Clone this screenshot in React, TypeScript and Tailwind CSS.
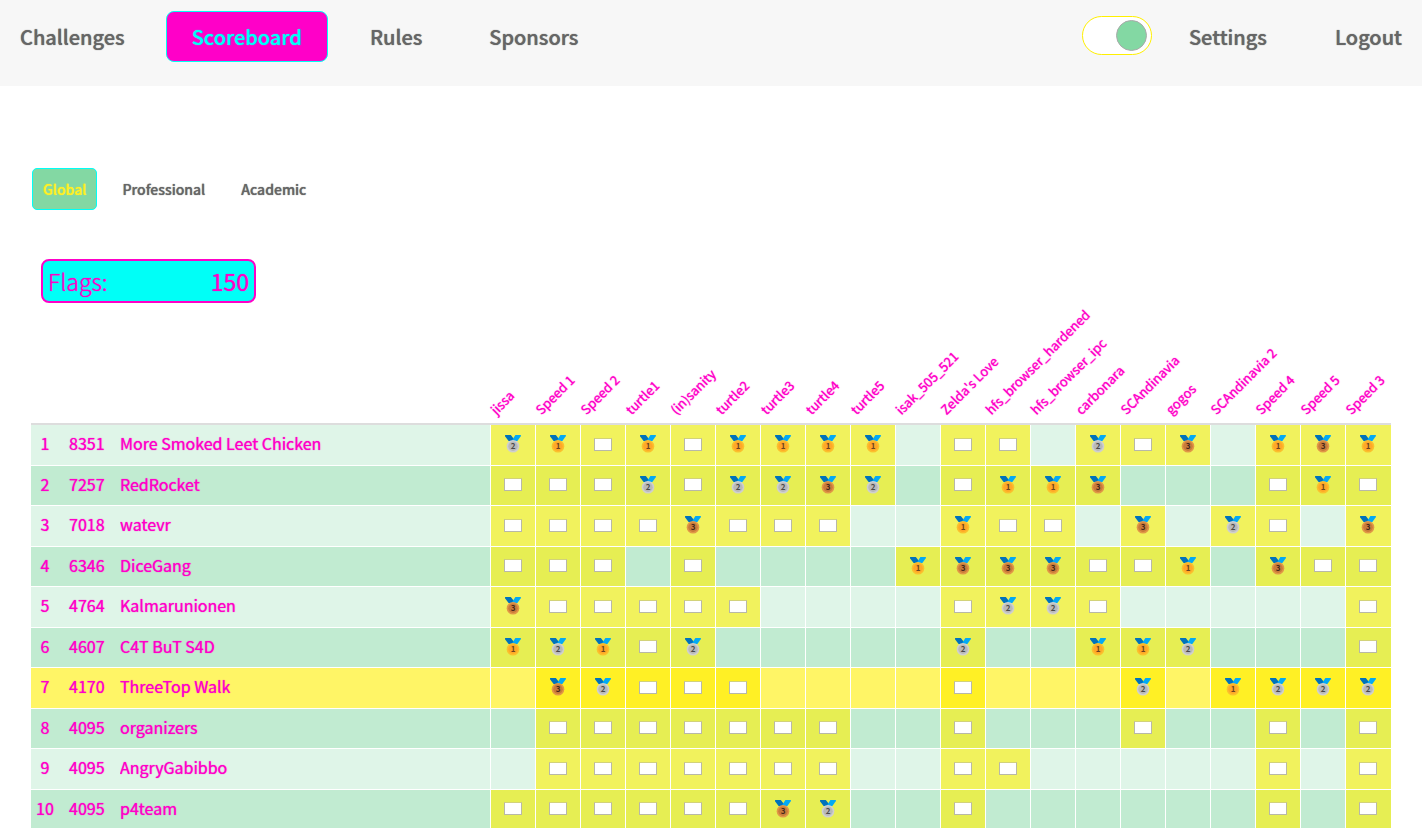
import { useState } from "react";

type Solve = "1" | "2" | "3" | "f" | "-";

const challenges = [
  "jissa", "Speed 1", "Speed 2", "turtle1", "(in)sanity", "turtle2", "turtle3", "turtle4", "turtle5",
  "isak_505_521", "Zelda's Love", "hfs_browser_hardened", "hfs_browser_ipc", "carbonara", "SCAndinavia",
  "gogos", "SCAndinavia 2", "Speed 4", "Speed 5", "Speed 3",
];

// One character per challenge: 1-3 is a medal, f a plain flag, - unsolved.
const teams = [
  { score: 8351, name: "More Smoked Leet Chicken", solves: "21f1f1111-ff-2f3-131" },
  { score: 7257, name: "RedRocket", solves: "fff2f2232-f113---f1f" },
  { score: 7018, name: "watevr", solves: "ffff3fff--1ff-3-2f-3" },
  { score: 6346, name: "DiceGang", solves: "fff-f----1333ff1-3ff" },
  { score: 4764, name: "Kalmarunionen", solves: "3fffff----f22f-----f" },
  { score: 4607, name: "C4T BuT S4D", solves: "121f2-----2--112---f" },
  { score: 4170, name: "ThreeTop Walk", solves: "-32fff----f---2-1222", own: true },
  { score: 4095, name: "organizers", solves: "-fffffff--f---f--f-f" },
  { score: 4095, name: "AngryGabibbo", solves: "-fffffff--ff-----f-f" },
  { score: 4095, name: "p4team", solves: "ffffff32--f------f-f" },
];

const metals = {
  "1": { rim: "#fbc02d", face: "#ffa828", ink: "#6b4520" },
  "2": { rim: "#cfcfcf", face: "#b9b9b9", ink: "#4a4a4a" },
  "3": { rim: "#e19747", face: "#c97b3a", ink: "#45291c" },
};

function Medal({ place }: { place: "1" | "2" | "3" }) {
  const m = metals[place];
  return (
    <svg viewBox="0 0 18 18" className="h-[18px] w-[18px] [text-shadow:none]" role="img" aria-label={`Place ${place}`}>
      <path d="M1 0h5.8L10 4 8 6H4.6L1.2 1.4Z" fill="#0072bb" />
      <path d="M11.4 0H17l-.3 1.2L13.4 6H7.6Z" fill="#03a9f4" />
      <circle cx="9" cy="11.2" r="6.3" fill={m.rim} />
      <circle cx="9" cy="11.2" r="4.7" fill={m.face} />
      <text x="9" y="14.2" textAnchor="middle" fontSize="8" fontWeight="700" fill={m.ink} fontFamily="'Noto Sans CJK SC', sans-serif">
        {place}
      </text>
    </svg>
  );
}

function Mark({ solve }: { solve: Solve }) {
  if (solve === "-") return null;
  if (solve === "f") {
    return <span role="img" aria-label="Solved" className="block h-[13px] w-[18px] border border-[#b8b8a8] border-t-[#d2d27a] bg-white" />;
  }
  return <Medal place={solve} />;
}

const navLink = "flex h-[51px] items-center rounded-lg text-xl font-medium [text-shadow:0_0_1px_currentColor]";
const tab = "h-[42px] rounded-[5px] border px-[10px] text-sm font-medium [text-shadow:0_0_1px_currentColor]";

export default function App() {
  const [scope, setScope] = useState("Global");
  const [on, setOn] = useState(true);

  return (
    <div className="min-h-screen overflow-hidden bg-white font-['Noto_Sans_CJK_SC',sans-serif] text-[#666666]">
      <header className="flex h-[86px] items-start justify-between bg-[#f7f7f7] px-5 pt-[11px]">
        <nav className="flex gap-[17px]">
          <a href="#challenges" className={`${navLink} pr-6`}>Challenges</a>
          <a href="#scoreboard" className={`${navLink} border border-[#00fff7] bg-[#ff00c8] px-[25px] text-[#00fff7]`}>Scoreboard</a>
          <a href="#rules" className={`${navLink} px-[25px]`}>Rules</a>
          <a href="#sponsors" className={`${navLink} px-[25px]`}>Sponsors</a>
        </nav>
        <div className="flex items-start gap-[68px]">
          <div className="flex items-start gap-[37px]">
            <label className="relative mt-[5px] block h-[39px] w-[70px] cursor-pointer">
              <input
                type="checkbox"
                aria-label="Theme"
                checked={on}
                onChange={() => setOn(!on)}
                className="peer block h-full w-full cursor-pointer appearance-none rounded-full border border-[#fff000] bg-white"
              />
              <span className="pointer-events-none absolute top-1 left-1 h-[31px] w-[31px] rounded-full border border-[#aaaaaa] bg-[#83d8a3] peer-checked:left-[34px]" />
            </label>
            <a href="#settings" className={navLink}>Settings</a>
          </div>
          <a href="#logout" className={navLink}>Logout</a>
        </div>
      </header>

      <main className="px-[31px] pt-[82px]">
        <div className="flex gap-[14px] pl-px">
          {["Global", "Professional", "Academic"].map((s) => (
            <button
              key={s}
              type="button"
              onClick={() => setScope(s)}
              className={`${tab} ${s === scope ? "border-[#00fff7] bg-[#83d8a3] text-[#fff025]" : "border-transparent"}`}
            >
              {s}
            </button>
          ))}
        </div>

        <div className="mt-[49px] ml-[10px] flex h-11 w-[215px] items-center justify-between rounded-lg border-2 border-[#ff00c8] bg-[#00fff7] px-[5px] text-[23px] text-[#ff00c8] [text-shadow:0_0_1px_currentColor]">
          <span className="font-light">Flags:</span>
          <span>150</span>
        </div>

        <table className="w-full table-fixed border-separate border-spacing-0 text-base text-[#ff00c8] [text-shadow:0_0_1px_currentColor]">
          <colgroup>
            <col className="w-7" />
            <col className="w-[61px]" />
            <col />
            {challenges.map((c) => <col key={c} className="w-[45px]" />)}
            <col className="w-px" />
          </colgroup>
          <thead>
            <tr className="h-[122px]">
              <th scope="col" aria-label="Rank" className="border-b-2 border-[#dddddd]" />
              <th scope="col" aria-label="Score" className="border-b-2 border-[#dddddd]" />
              <th scope="col" aria-label="Team" className="border-b-2 border-[#dddddd]" />
              {challenges.map((c, j) => (
                <th
                  key={c}
                  scope="col"
                  colSpan={j === challenges.length - 1 ? 2 : 1}
                  className="border-b-2 border-[#dddddd] p-0 pb-1 pl-[10px] align-bottom text-[13px] font-normal"
                >
                  <div className="h-5 w-5 origin-bottom-left -rotate-45 text-left leading-5 whitespace-nowrap">{c}</div>
                </th>
              ))}
            </tr>
          </thead>
          <tbody>
            {teams.map((t, i) => {
              const row = t.own ? "bg-[#fff566]" : i % 2 ? "bg-[#c1ebd1]" : "bg-[#dff5e8]";
              const hit = t.own ? "bg-[#fff025]" : i % 2 ? "bg-[#e6ee53]" : "bg-[#f1f25d]";
              return (
                <tr key={t.name} className={`${row} ${i % 2 ? "h-10" : "h-[41px]"}`}>
                  <td className="border-b border-white p-0 pb-1 text-center">{i + 1}</td>
                  <td className="border-b border-white p-0 pb-1 pl-[10px]">{t.score}</td>
                  <td className="truncate border-b border-white p-0 pb-1">{t.name}</td>
                  {challenges.map((c, j) => {
                    const solve = t.solves[j] as Solve;
                    return (
                      <td
                        key={c}
                        colSpan={j === challenges.length - 1 ? 2 : 1}
                        className={`border-b border-l border-white p-0 pb-[2px] ${solve === "-" ? "" : hit} ${j === challenges.length - 1 ? "pr-px" : ""}`}
                      >
                        <div className="flex justify-center"><Mark solve={solve} /></div>
                      </td>
                    );
                  })}
                </tr>
              );
            })}
          </tbody>
        </table>
      </main>
    </div>
  );
}
